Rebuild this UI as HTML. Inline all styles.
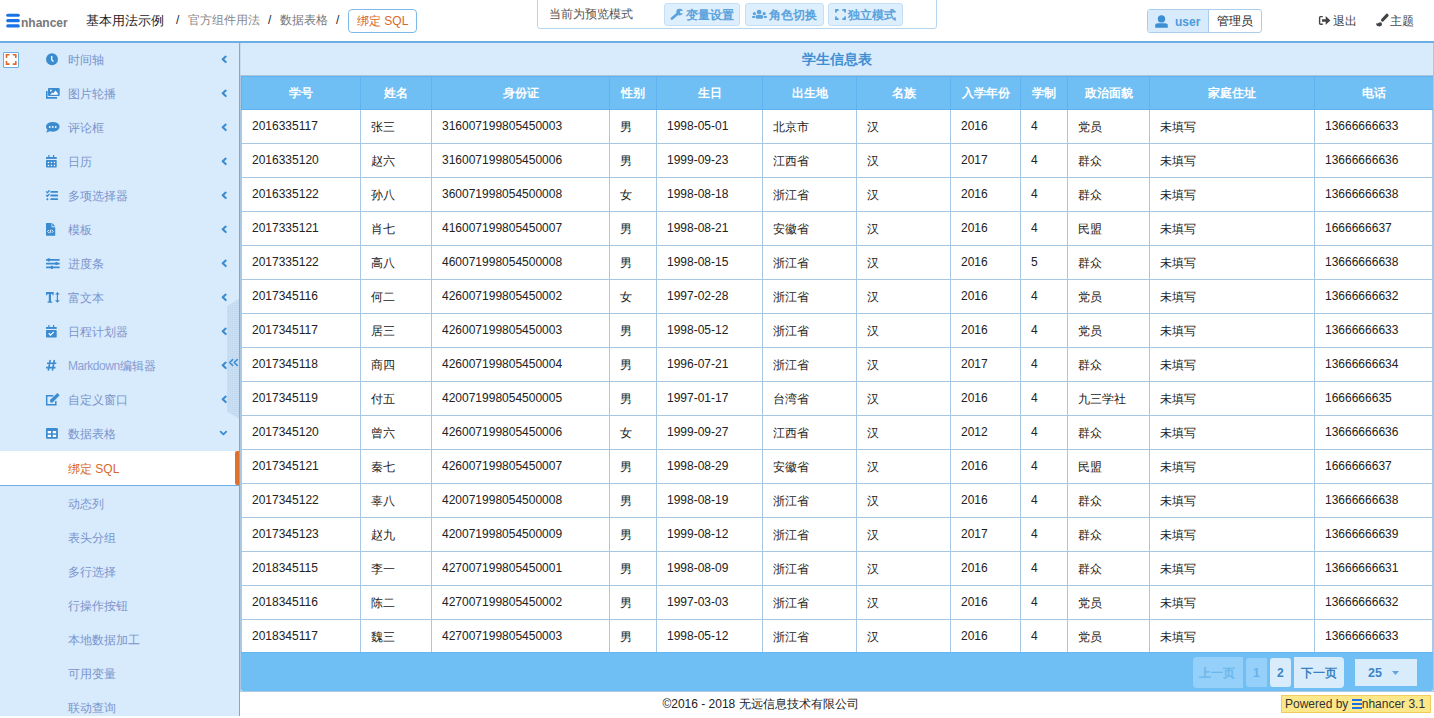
<!DOCTYPE html>
<html><head><meta charset="utf-8">
<style>
*{box-sizing:border-box;margin:0;padding:0}
html,body{width:1434px;height:718px;overflow:hidden;background:#fff;font-family:"Liberation Sans",sans-serif;font-size:12px;color:#222}
.abs{position:absolute}
#hdr{position:absolute;left:0;top:0;width:1434px;height:41px;background:#fff}
#hline{position:absolute;left:0;top:41px;width:1434px;height:2px;background:#6caee1}
.logo-bar{position:absolute;left:6px;width:14px;height:3px;border-radius:2px;background:#1a73e6}
#logo-t{position:absolute;left:21px;top:16px;font-weight:bold;font-size:12px;color:#777;line-height:14px}
.bc{position:absolute;top:12px;line-height:16px;white-space:nowrap}
#side{position:absolute;left:0;top:43px;width:239px;height:673px;background:#d8ebfc}
#sline{position:absolute;left:239px;top:43px;width:1px;height:673px;background:#64b3ef}
.it{position:absolute;left:0;width:239px;height:34px}
.tx{position:absolute;left:68px;top:9px;line-height:16px;font-size:12px;color:#7b94cc;white-space:nowrap}
svg.ic{position:absolute}
.chev{position:absolute;left:221px;top:13px}
#main{position:absolute;left:240px;top:43px;width:1194px;height:649px;background:#fff;border:1px solid #abc9e2;border-top:0}
#title{position:absolute;left:241px;top:43px;width:1192px;height:33px;background:#d8ebfc;border-bottom:1px solid #abc4da;text-align:center;font-weight:bold;font-size:13.6px;color:#3f8fd2;line-height:34px}
table{position:absolute;left:241px;top:76px;border-collapse:collapse;table-layout:fixed;width:1191px}
th{height:33px;padding-top:1px !important;background:#6fbff5;color:#fff;font-weight:bold;font-size:12px;border-left:1px solid #60b2f0;border-top:1px solid #60b3f1;border-bottom:1px solid #5eb1f0;text-align:center;padding:0}
td{height:34px;border:1px solid #a6c8e4;padding:0 0 2px 10px;font-size:12px;color:#222;white-space:nowrap}
.cj{position:relative;top:2px}
#foot{position:absolute;left:241px;top:652px;width:1192px;height:39px;background:#6fbff5;border-radius:0 0 2px 2px;border-top:1px solid #63b5f0}
.pg{position:absolute;text-align:center;font-size:12px;white-space:nowrap}
#copy{position:absolute;left:240px;top:697px;width:1041px;text-align:center;line-height:14px;font-size:12px;color:#222}
#pow{position:absolute;left:1281px;top:695px;width:150px;height:18px;background:#fce88a;border:1px solid #f0cd5a;font-size:12px;line-height:16px;color:#333;padding-left:3px;white-space:nowrap}
</style></head><body>
<div id="hdr">
  <svg class="abs" style="left:0;top:0" width="24" height="32" viewBox="0 0 24 32"><g fill="#1a73e6"><rect x="6.2" y="13.7" width="13.6" height="3.1" rx="1.5"/><rect x="6.2" y="19.1" width="13.6" height="3.2" rx="1.5"/><rect x="6.2" y="24.3" width="13.6" height="3.3" rx="1.6"/></g></svg>
  <div id="logo-t">nhancer</div>
  <div class="bc" style="left:86px;top:13px;font-size:13px;color:#222">基本用法示例</div>
  <div class="bc" style="left:176px;color:#223">/</div>
  <div class="bc" style="left:188px;color:#888">官方组件用法</div>
  <div class="bc" style="left:268px;color:#223">/</div>
  <div class="bc" style="left:280px;color:#777">数据表格</div>
  <div class="bc" style="left:336px;color:#223">/</div>
  <div class="abs" style="left:348px;top:9px;width:69px;height:24px;border:1px solid #7db9e8;border-radius:4px;color:#d9682a;font-size:12px;line-height:22px;padding-left:8px;white-space:nowrap">绑定 SQL</div>

  <div class="abs" style="left:537px;top:-5px;width:400px;height:34px;border:1px solid #b6d6f0;border-radius:3px"></div>
  <div class="abs" style="left:549px;top:6px;line-height:16px;color:#555">当前为预览模式</div>
  <div class="abs" style="left:664px;top:3px;width:76px;height:23px;background:#ddeefc;border:1px solid #c6dff4;border-radius:3px"></div>
  <div class="abs" style="left:745px;top:3px;width:79px;height:23px;background:#ddeefc;border:1px solid #c6dff4;border-radius:3px"></div>
  <div class="abs" style="left:828px;top:3px;width:75px;height:23px;background:#ddeefc;border:1px solid #c6dff4;border-radius:3px"></div>
  <div class="abs" style="left:686px;top:7px;line-height:16px;color:#5aa2dc;font-weight:bold">变量设置</div>
  <div class="abs" style="left:769px;top:7px;line-height:16px;color:#5aa2dc;font-weight:bold">角色切换</div>
  <div class="abs" style="left:848px;top:7px;line-height:16px;color:#5aa2dc;font-weight:bold">独立模式</div>

  <div class="abs" style="left:1147px;top:9px;width:115px;height:24px;border:1px solid #a9cdea;border-radius:3px;background:#fff"></div>
  <div class="abs" style="left:1148px;top:10px;width:61px;height:22px;background:#d8ebfc;border-right:1px solid #a9cdea;border-radius:2px 0 0 2px"></div>
  <div class="abs" style="left:1175px;top:14px;line-height:16px;font-size:12px;font-weight:bold;color:#4c9ad9">user</div>
  <div class="abs" style="left:1217px;top:13px;line-height:16px;font-size:12px;color:#222">管理员</div>
  
  <svg class="abs" style="left:666px;top:4px" width="24" height="20" viewBox="0 0 24 20"><path d="M6 14.6L11.6 9.8" stroke="#5ca3dc" stroke-width="2.7" stroke-linecap="round"/><circle cx="13.6" cy="8.1" r="3.3" fill="#5ca3dc"/><path d="M14.2 6.9H17.6V9.3H14.2z" fill="#ddeefc"/></svg>
  <svg class="abs" style="left:748px;top:4px" width="24" height="20" viewBox="0 0 24 20"><g fill="#5ca3dc"><circle cx="11.1" cy="8.1" r="2.4"/><rect x="7.8" y="11" width="7.2" height="3.8" rx="1.2"/><circle cx="6.4" cy="9.7" r="1.6"/><rect x="3.9" y="11.9" width="3.4" height="2.1" rx="1"/><circle cx="16.2" cy="9.7" r="1.6"/><rect x="15.6" y="11.9" width="3.4" height="2.1" rx="1"/></g></svg>
  <svg class="abs" style="left:830px;top:4px" width="24" height="20" viewBox="0 0 24 20"><path d="M6 8.6V6H8.6M12.4 6H15V8.6M15 12.4V15H12.4M8.6 15H6V12.4" stroke="#5ca3dc" stroke-width="1.9" fill="none"/></svg>
  <svg class="abs" style="left:1150px;top:10px" width="24" height="22" viewBox="0 0 24 22"><g fill="#3d8fd4"><circle cx="11.5" cy="8.9" r="3.7"/><path d="M5.2 17.8V15.6Q5.2 13.2 8.2 13.2H14.8Q17.8 13.2 17.8 15.6V17.8z"/></g></svg>
  <svg class="abs" style="left:1314px;top:8px" width="24" height="24" viewBox="0 0 24 24"><path d="M8.8 8.6H6.6Q5.6 8.6 5.6 9.6V15.2Q5.6 16.2 6.6 16.2H8.8" stroke="#444" stroke-width="1.4" fill="none"/><path d="M8 11.2H11.7V8L16.4 12.4L11.7 16.7V13.7H8z" fill="#444"/></svg>
  <svg class="abs" style="left:1370px;top:8px" width="24" height="24" viewBox="0 0 24 24"><g fill="#444"><path d="M12.6 12L17 7.3" stroke="#444" stroke-width="3.2" stroke-linecap="round"/><path d="M6 15.2Q7.6 15.9 8.7 14.8Q10.3 13.5 11.7 14.9Q12.7 16.3 11.3 17.8Q9.7 19 7.4 18.1Q6.1 17.3 6 15.2z"/></g></svg>
<div class="abs" style="left:1333px;top:13px;line-height:16px;color:#444">退出</div>
  <div class="abs" style="left:1390px;top:13px;line-height:16px;color:#444">主题</div>
</div>
<div id="hline"></div>

<div id="side"></div><div id="sidec" style="position:absolute;left:0;top:0"><svg class="ic" style="left:40px;top:48px" width="24" height="24" viewBox="0 0 24 24"><circle cx="12" cy="11.3" r="5.95" fill="#3b8bd0"/><path d="M11.7 8.1V11.8L13.5 13.6" stroke="#fff" stroke-width="1.3" fill="none"/></svg>
<div class="tx" style="top:52px">时间轴</div>
<svg class="ic" style="left:216px;top:48px" width="16" height="24" viewBox="0 0 16 24"><path d="M9.7 8.6L6.7 11.35L9.7 14.1" stroke="#3b8bd0" stroke-width="2.1" fill="none" stroke-linecap="round" stroke-linejoin="round"/></svg>
<svg class="ic" style="left:40px;top:82px" width="24" height="24" viewBox="0 0 24 24"><path d="M6 9h1.6v6h9.4v1.7H6z" fill="#3b8bd0"/><rect x="8" y="6" width="11.7" height="8" rx="1" fill="#3b8bd0"/><path d="M10 12.7L12.4 10.5L13.4 11.3L15.5 8.6L17.8 11.2V12.7z" fill="#fff"/><circle cx="10.9" cy="8.5" r="0.9" fill="#fff"/></svg>
<div class="tx" style="top:86px">图片轮播</div>
<svg class="ic" style="left:216px;top:82px" width="16" height="24" viewBox="0 0 16 24"><path d="M9.7 8.6L6.7 11.35L9.7 14.1" stroke="#3b8bd0" stroke-width="2.1" fill="none" stroke-linecap="round" stroke-linejoin="round"/></svg>
<svg class="ic" style="left:40px;top:116px" width="24" height="24" viewBox="0 0 24 24"><ellipse cx="12.8" cy="10.8" rx="6.85" ry="4.85" fill="#3b8bd0"/><path d="M7.6 13.3L6.2 16.8L10.2 14.9z" fill="#3b8bd0"/><rect x="8.9" y="10.2" width="1.6" height="1.6" fill="#fff"/><rect x="11.9" y="10.2" width="1.6" height="1.6" fill="#fff"/><rect x="14.9" y="10.2" width="1.6" height="1.6" fill="#fff"/></svg>
<div class="tx" style="top:120px">评论框</div>
<svg class="ic" style="left:216px;top:116px" width="16" height="24" viewBox="0 0 16 24"><path d="M9.7 8.6L6.7 11.35L9.7 14.1" stroke="#3b8bd0" stroke-width="2.1" fill="none" stroke-linecap="round" stroke-linejoin="round"/></svg>
<svg class="ic" style="left:40px;top:150px" width="24" height="24" viewBox="0 0 24 24"><rect x="8.3" y="5" width="1.2" height="2.5" fill="#3b8bd0"/><rect x="13" y="5" width="1.2" height="2.5" fill="#3b8bd0"/><rect x="6" y="7" width="10.7" height="1.9" fill="#3b8bd0"/><rect x="6" y="10" width="10.7" height="7.4" rx="0.7" fill="#3b8bd0"/><g fill="#fff"><rect x="7.8" y="11.8" width="1.3" height="1.3"/><rect x="10.8" y="11.8" width="1.3" height="1.3"/><rect x="13.8" y="11.8" width="1.3" height="1.3"/><rect x="7.8" y="14.8" width="1.3" height="1.3"/><rect x="10.8" y="14.8" width="1.3" height="1.3"/><rect x="13.8" y="14.8" width="1.3" height="1.3"/></g></svg>
<div class="tx" style="top:154px">日历</div>
<svg class="ic" style="left:216px;top:150px" width="16" height="24" viewBox="0 0 16 24"><path d="M9.7 8.6L6.7 11.35L9.7 14.1" stroke="#3b8bd0" stroke-width="2.1" fill="none" stroke-linecap="round" stroke-linejoin="round"/></svg>
<svg class="ic" style="left:40px;top:184px" width="24" height="24" viewBox="0 0 24 24"><g fill="#3b8bd0"><rect x="10.4" y="7" width="7.6" height="1.8" rx="0.5"/><rect x="10.4" y="10.6" width="7.6" height="1.8" rx="0.5"/><rect x="10.4" y="14.3" width="7.6" height="1.8" rx="0.5"/><path d="M7.3 15.2l1.3 -1.3l1.3 1.3l-1.3 1.3z" transform="translate(-1.2,0)"/></g><path d="M6.2 7.4L7.4 8.7L9.6 6.3M6.2 11L7.4 12.3L9.6 9.9" stroke="#3b8bd0" stroke-width="1.3" fill="none"/></svg>
<div class="tx" style="top:188px">多项选择器</div>
<svg class="ic" style="left:216px;top:184px" width="16" height="24" viewBox="0 0 16 24"><path d="M9.7 8.6L6.7 11.35L9.7 14.1" stroke="#3b8bd0" stroke-width="2.1" fill="none" stroke-linecap="round" stroke-linejoin="round"/></svg>
<svg class="ic" style="left:40px;top:218px" width="24" height="24" viewBox="0 0 24 24"><path d="M6.6 5H11.6V9.2H15.2V17.2Q15.2 17.7 14.7 17.7H6.6Q6 17.7 6 17.2V5.6Q6 5 6.6 5z" fill="#3b8bd0"/><path d="M12.3 5L15.2 8.2H12.3z" fill="#3b8bd0"/><path d="M8.8 12L7.6 13.4L8.8 14.8M11.9 12L13.1 13.4L11.9 14.8M10.9 11.6L9.8 15.3" stroke="#fff" stroke-width="0.9" fill="none"/></svg>
<div class="tx" style="top:222px">模板</div>
<svg class="ic" style="left:216px;top:218px" width="16" height="24" viewBox="0 0 16 24"><path d="M9.7 8.6L6.7 11.35L9.7 14.1" stroke="#3b8bd0" stroke-width="2.1" fill="none" stroke-linecap="round" stroke-linejoin="round"/></svg>
<svg class="ic" style="left:40px;top:252px" width="24" height="24" viewBox="0 0 24 24"><g fill="#3b8bd0"><rect x="6" y="7" width="13.7" height="1.7" rx="0.5"/><rect x="6" y="10.7" width="13.7" height="1.7" rx="0.5"/><rect x="6" y="14.5" width="13.7" height="1.7" rx="0.5"/><rect x="7.7" y="6.2" width="2.2" height="3.2" rx="0.6"/><rect x="15.4" y="9.9" width="2.2" height="3.2" rx="0.6"/><rect x="10.8" y="13.7" width="2.2" height="3.2" rx="0.6"/></g></svg>
<div class="tx" style="top:256px">进度条</div>
<svg class="ic" style="left:216px;top:252px" width="16" height="24" viewBox="0 0 16 24"><path d="M9.7 8.6L6.7 11.35L9.7 14.1" stroke="#3b8bd0" stroke-width="2.1" fill="none" stroke-linecap="round" stroke-linejoin="round"/></svg>
<svg class="ic" style="left:40px;top:286px" width="24" height="24" viewBox="0 0 24 24"><g fill="#3b8bd0"><path d="M6 6H13.7V9.2H12.6L12.2 8H11V15.4H12.2V16.7H7.6V15.4H8.8V8H7.5L7.1 9.2H6z"/><path d="M17.4 6L19.8 8.6H18V14.2H19.8L17.4 16.8L15 14.2H16.8V8.6H15z"/></g></svg>
<div class="tx" style="top:290px">富文本</div>
<svg class="ic" style="left:216px;top:286px" width="16" height="24" viewBox="0 0 16 24"><path d="M9.7 8.6L6.7 11.35L9.7 14.1" stroke="#3b8bd0" stroke-width="2.1" fill="none" stroke-linecap="round" stroke-linejoin="round"/></svg>
<svg class="ic" style="left:40px;top:320px" width="24" height="24" viewBox="0 0 24 24"><rect x="8.3" y="5" width="1.2" height="2.5" fill="#3b8bd0"/><rect x="13" y="5" width="1.2" height="2.5" fill="#3b8bd0"/><rect x="6" y="7" width="10.7" height="1.9" fill="#3b8bd0"/><rect x="6" y="10" width="10.7" height="7.4" rx="0.7" fill="#3b8bd0"/><path d="M8.7 13.3L10.5 15.1L13.8 11.9" stroke="#fff" stroke-width="1.3" fill="none"/></svg>
<div class="tx" style="top:324px">日程计划器</div>
<svg class="ic" style="left:216px;top:320px" width="16" height="24" viewBox="0 0 16 24"><path d="M9.7 8.6L6.7 11.35L9.7 14.1" stroke="#3b8bd0" stroke-width="2.1" fill="none" stroke-linecap="round" stroke-linejoin="round"/></svg>
<svg class="ic" style="left:40px;top:354px" width="24" height="24" viewBox="0 0 24 24"><path d="M10.2 6L8.3 16.7M14.3 6L12.4 16.7M7 9.2H16.3M6 13.6H15.5" stroke="#3b8bd0" stroke-width="1.6" fill="none"/></svg>
<div class="tx" style="top:358px"><span style="letter-spacing:-0.45px;color:#8aa0d4">Markdown</span>编辑器</div>
<svg class="ic" style="left:216px;top:354px" width="16" height="24" viewBox="0 0 16 24"><path d="M9.7 8.6L6.7 11.35L9.7 14.1" stroke="#3b8bd0" stroke-width="2.1" fill="none" stroke-linecap="round" stroke-linejoin="round"/></svg>
<svg class="ic" style="left:40px;top:388px" width="24" height="24" viewBox="0 0 24 24"><path d="M13.3 7.7H6.7V16.7H15.8V13" stroke="#3b8bd0" stroke-width="1.5" fill="none"/><path d="M10.3 14.6L10 11.9L17.4 4.9L19.6 7.2L12.6 14.6z" fill="#3b8bd0"/></svg>
<div class="tx" style="top:392px">自定义窗口</div>
<svg class="ic" style="left:216px;top:388px" width="16" height="24" viewBox="0 0 16 24"><path d="M9.7 8.6L6.7 11.35L9.7 14.1" stroke="#3b8bd0" stroke-width="2.1" fill="none" stroke-linecap="round" stroke-linejoin="round"/></svg>
<svg class="ic" style="left:40px;top:422px" width="24" height="24" viewBox="0 0 24 24"><rect x="6" y="6" width="11.9" height="10.7" rx="1" fill="#3b8bd0"/><g fill="#fff"><rect x="7.7" y="9" width="3.3" height="2.3"/><rect x="12.7" y="9" width="3.4" height="2.3"/><rect x="7.7" y="12.8" width="3.3" height="2.2"/><rect x="12.7" y="12.8" width="3.4" height="2.2"/></g></svg>
<div class="tx" style="top:426px">数据表格</div>
<svg class="ic" style="left:216px;top:422px" width="16" height="24" viewBox="0 0 16 24"><path d="M4.6 9.6L7.4 12.4L10.2 9.6" stroke="#3b8bd0" stroke-width="1.8" fill="none" stroke-linecap="round" stroke-linejoin="round"/></svg>
<div style="position:absolute;left:0;top:451px;width:239px;height:34px;background:#fff"></div>
<div style="position:absolute;left:0;top:485px;width:239px;height:1px;background:#6caee1"></div>
<div style="position:absolute;left:235px;top:451px;width:4px;height:34px;background:#e0702e;border-radius:2px 0 0 2px"></div>
<div class="tx" style="top:461px;color:#d9682a">绑定 SQL</div>
<div class="tx" style="top:496px">动态列</div>
<div class="tx" style="top:530px">表头分组</div>
<div class="tx" style="top:564px">多行选择</div>
<div class="tx" style="top:598px">行操作按钮</div>
<div class="tx" style="top:632px">本地数据加工</div>
<div class="tx" style="top:666px">可用变量</div>
<div class="tx" style="top:700px">联动查询</div>
</div>

<div class="abs" style="left:3px;top:52px;width:16px;height:16px;background:#fff;border:1px solid #6aaee3;border-radius:1px"></div>
<svg class="abs" style="left:0;top:48px" width="24" height="24" viewBox="0 0 24 24"><path d="M6.5 10V6.8H9.6M12.7 6.8H15.8V10M15.8 13V16.1H12.7M9.6 16.1H6.5V13" stroke="#e0682a" stroke-width="1.6" fill="none"/></svg>
<svg class="abs" style="left:220px;top:295px" width="20" height="130" viewBox="0 0 20 130"><defs><pattern id="dp" width="2" height="2" patternUnits="userSpaceOnUse"><rect width="2" height="2" fill="#c9def2"/><rect width="1" height="1" fill="#bed6ec"/></pattern></defs><path d="M7 11.6L19 3.8V123.6L7 116.8z" fill="url(#dp)"/><path d="M12.6 64.6L9.6 67.5L12.6 70.4M17.2 64.6L14.2 67.5L17.2 70.4" stroke="#3d8dd4" stroke-width="1.6" fill="none" stroke-linecap="round" stroke-linejoin="round"/></svg>
<div id="sline"></div>

<div id="main"></div>
<div class="abs" style="left:240px;top:43px;width:1px;height:32px;background:#c6dcef"></div>
<div id="title">学生信息表</div>
<table>
<colgroup><col style="width:119px"><col style="width:71px"><col style="width:178px"><col style="width:47px"><col style="width:106px"><col style="width:94px"><col style="width:94px"><col style="width:70px"><col style="width:47px"><col style="width:82px"><col style="width:165px"><col style="width:118px"></colgroup>
<thead><tr><th>学号</th><th>姓名</th><th>身份证</th><th>性别</th><th>生日</th><th>出生地</th><th>名族</th><th>入学年份</th><th>学制</th><th>政治面貌</th><th>家庭住址</th><th>电话</th></tr></thead>
<tbody>
<tr><td>2016335117</td><td><span class="cj">张三</span></td><td>316007199805450003</td><td><span class="cj">男</span></td><td>1998-05-01</td><td><span class="cj">北京市</span></td><td><span class="cj">汉</span></td><td>2016</td><td>4</td><td><span class="cj">党员</span></td><td><span class="cj">未填写</span></td><td>13666666633</td></tr>
<tr><td>2016335120</td><td><span class="cj">赵六</span></td><td>316007199805450006</td><td><span class="cj">男</span></td><td>1999-09-23</td><td><span class="cj">江西省</span></td><td><span class="cj">汉</span></td><td>2017</td><td>4</td><td><span class="cj">群众</span></td><td><span class="cj">未填写</span></td><td>13666666636</td></tr>
<tr><td>2016335122</td><td><span class="cj">孙八</span></td><td>360071998054500008</td><td><span class="cj">女</span></td><td>1998-08-18</td><td><span class="cj">浙江省</span></td><td><span class="cj">汉</span></td><td>2016</td><td>4</td><td><span class="cj">群众</span></td><td><span class="cj">未填写</span></td><td>13666666638</td></tr>
<tr><td>2017335121</td><td><span class="cj">肖七</span></td><td>416007199805450007</td><td><span class="cj">男</span></td><td>1998-08-21</td><td><span class="cj">安徽省</span></td><td><span class="cj">汉</span></td><td>2016</td><td>4</td><td><span class="cj">民盟</span></td><td><span class="cj">未填写</span></td><td>1666666637</td></tr>
<tr><td>2017335122</td><td><span class="cj">高八</span></td><td>460071998054500008</td><td><span class="cj">男</span></td><td>1998-08-15</td><td><span class="cj">浙江省</span></td><td><span class="cj">汉</span></td><td>2016</td><td>5</td><td><span class="cj">群众</span></td><td><span class="cj">未填写</span></td><td>13666666638</td></tr>
<tr><td>2017345116</td><td><span class="cj">何二</span></td><td>426007199805450002</td><td><span class="cj">女</span></td><td>1997-02-28</td><td><span class="cj">浙江省</span></td><td><span class="cj">汉</span></td><td>2016</td><td>4</td><td><span class="cj">党员</span></td><td><span class="cj">未填写</span></td><td>13666666632</td></tr>
<tr><td>2017345117</td><td><span class="cj">居三</span></td><td>426007199805450003</td><td><span class="cj">男</span></td><td>1998-05-12</td><td><span class="cj">浙江省</span></td><td><span class="cj">汉</span></td><td>2016</td><td>4</td><td><span class="cj">党员</span></td><td><span class="cj">未填写</span></td><td>13666666633</td></tr>
<tr><td>2017345118</td><td><span class="cj">商四</span></td><td>426007199805450004</td><td><span class="cj">男</span></td><td>1996-07-21</td><td><span class="cj">浙江省</span></td><td><span class="cj">汉</span></td><td>2017</td><td>4</td><td><span class="cj">群众</span></td><td><span class="cj">未填写</span></td><td>13666666634</td></tr>
<tr><td>2017345119</td><td><span class="cj">付五</span></td><td>420071998054500005</td><td><span class="cj">男</span></td><td>1997-01-17</td><td><span class="cj">台湾省</span></td><td><span class="cj">汉</span></td><td>2016</td><td>4</td><td><span class="cj">九三学社</span></td><td><span class="cj">未填写</span></td><td>1666666635</td></tr>
<tr><td>2017345120</td><td><span class="cj">曾六</span></td><td>426007199805450006</td><td><span class="cj">女</span></td><td>1999-09-27</td><td><span class="cj">江西省</span></td><td><span class="cj">汉</span></td><td>2012</td><td>4</td><td><span class="cj">群众</span></td><td><span class="cj">未填写</span></td><td>13666666636</td></tr>
<tr><td>2017345121</td><td><span class="cj">秦七</span></td><td>426007199805450007</td><td><span class="cj">男</span></td><td>1998-08-29</td><td><span class="cj">安徽省</span></td><td><span class="cj">汉</span></td><td>2016</td><td>4</td><td><span class="cj">民盟</span></td><td><span class="cj">未填写</span></td><td>1666666637</td></tr>
<tr><td>2017345122</td><td><span class="cj">辜八</span></td><td>420071998054500008</td><td><span class="cj">男</span></td><td>1998-08-19</td><td><span class="cj">浙江省</span></td><td><span class="cj">汉</span></td><td>2016</td><td>4</td><td><span class="cj">群众</span></td><td><span class="cj">未填写</span></td><td>13666666638</td></tr>
<tr><td>2017345123</td><td><span class="cj">赵九</span></td><td>420071998054500009</td><td><span class="cj">男</span></td><td>1999-08-12</td><td><span class="cj">浙江省</span></td><td><span class="cj">汉</span></td><td>2017</td><td>4</td><td><span class="cj">群众</span></td><td><span class="cj">未填写</span></td><td>13666666639</td></tr>
<tr><td>2018345115</td><td><span class="cj">李一</span></td><td>427007199805450001</td><td><span class="cj">男</span></td><td>1998-08-09</td><td><span class="cj">浙江省</span></td><td><span class="cj">汉</span></td><td>2016</td><td>4</td><td><span class="cj">群众</span></td><td><span class="cj">未填写</span></td><td>13666666631</td></tr>
<tr><td>2018345116</td><td><span class="cj">陈二</span></td><td>427007199805450002</td><td><span class="cj">男</span></td><td>1997-03-03</td><td><span class="cj">浙江省</span></td><td><span class="cj">汉</span></td><td>2016</td><td>4</td><td><span class="cj">党员</span></td><td><span class="cj">未填写</span></td><td>13666666632</td></tr>
<tr><td>2018345117</td><td><span class="cj">魏三</span></td><td>427007199805450003</td><td><span class="cj">男</span></td><td>1998-05-12</td><td><span class="cj">浙江省</span></td><td><span class="cj">汉</span></td><td>2016</td><td>4</td><td><span class="cj">党员</span></td><td><span class="cj">未填写</span></td><td>13666666633</td></tr>
</tbody>
</table>
<div id="foot"></div>

<div class="abs" style="left:1193px;top:657px;width:50px;height:31px;background:#94d0f9;border-radius:4px 0 0 4px"></div>
<div class="abs" style="left:1199px;top:665px;line-height:16px;font-size:12px;font-weight:bold;color:#6cb6ec">上一页</div>
<div class="abs" style="left:1246px;top:658px;width:21px;height:29px;background:#94d0f9;border-radius:3px 0 0 3px"></div>
<div class="abs" style="left:1253px;top:665px;line-height:16px;font-size:12px;font-weight:bold;color:#68b3ea">1</div>
<div class="abs" style="left:1270px;top:658px;width:21px;height:29px;background:#d8ecfc;border-radius:3px"></div>
<div class="abs" style="left:1277px;top:665px;line-height:16px;font-size:12px;font-weight:bold;color:#3a85c8">2</div>
<div class="abs" style="left:1294px;top:657px;width:50px;height:31px;background:#d8ecfc;border-radius:0 4px 4px 0"></div>
<div class="abs" style="left:1301px;top:665px;line-height:16px;font-size:12px;font-weight:bold;color:#3a7fc0">下一页</div>
<div class="abs" style="left:1355px;top:659px;width:62px;height:27px;background:#d8ecfc"></div>
<div class="abs" style="left:1368px;top:665px;line-height:16px;font-size:12.5px;font-weight:bold;color:#3a85c8">25</div>
<svg class="abs" style="left:1390px;top:668px" width="12" height="10" viewBox="0 0 12 10"><path d="M2 3H9L5.5 7z" fill="#5ea4de"/></svg>
<div id="copy">©2016 - 2018 无远信息技术有限公司</div>
<div id="pow">Powered by <span style="display:inline-block;width:10px;height:10px;vertical-align:-1px;position:relative"><i style="position:absolute;left:0;top:0;width:10px;height:1.6px;background:#1a73e6"></i><i style="position:absolute;left:0;top:4.2px;width:10px;height:1.6px;background:#1a73e6"></i><i style="position:absolute;left:0;top:8.4px;width:10px;height:1.6px;background:#1a73e6"></i></span>nhancer 3.1</div>
</body></html>
